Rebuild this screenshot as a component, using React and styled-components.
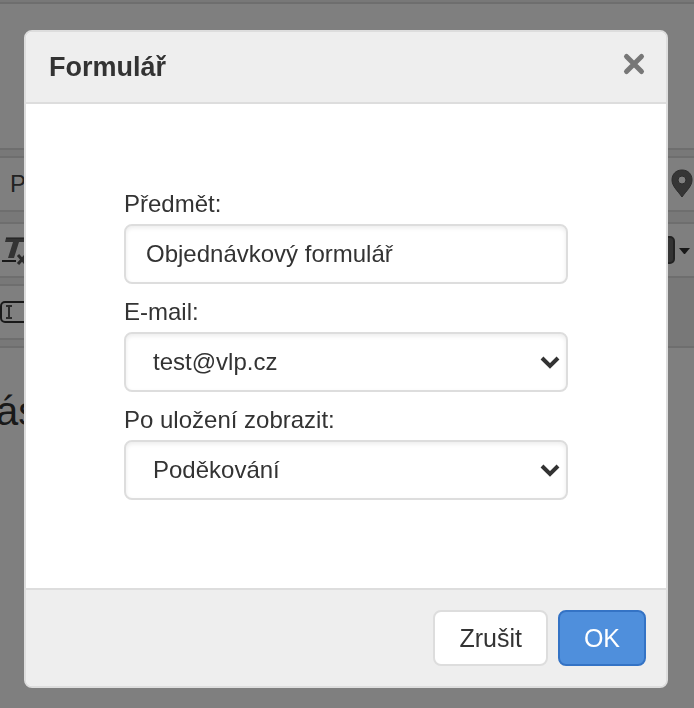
import { useState } from 'react';
import styled, { createGlobalStyle } from 'styled-components';

const GlobalStyle = createGlobalStyle`
  * {
    box-sizing: border-box;
  }
  body {
    margin: 0;
    background: #fff;
    color: #333;
    font-family: "Liberation Sans", Arial, sans-serif;
    font-size: 24px;
  }
`;

const Editor = styled.div`
  height: 100vh;
  overflow: hidden;
  display: flex;
  flex-direction: column;
  background: #fff;
`;

const TopBar = styled.div`
  height: 4px;
  flex-shrink: 0;
  background: #f0f0f0;
  border-bottom: 2px solid #ddd;
`;

const Heading = styled.div`
  height: 144px;
  flex-shrink: 0;
`;

const Toolbars = styled.div`
  display: flex;
  flex-direction: column;
  flex-shrink: 0;
  padding: 6px 0;
  background: #f0f0f0;
  border-top: 2px solid #ddd;
  border-bottom: 2px solid #ddd;
`;

const Toolbar = styled.div`
  display: flex;
  align-items: center;
  justify-content: space-between;
  width: ${props => props.$short ? '50%' : '100%'};
  height: 56px;
  margin-bottom: ${props => props.$gap || 0}px;
  padding-left: ${props => props.$inset || 0}px;
  background: #fff;
  border-top: 2px solid #ddd;
  border-bottom: 2px solid #ddd;
`;

const ToolButton = styled.button`
  display: flex;
  align-items: center;
  padding: 0;
  border: 0;
  background: none;
  color: #444;
  font: inherit;
`;

const Content = styled.div`
  padding: 40px 0;
  font-size: 40px;
  line-height: 46px;
  text-indent: -4px;
`;

const Backdrop = styled.div`
  position: fixed;
  inset: 0;
  overflow: auto;
  padding: 30px 26px 20px 24px;
  background: rgba(0, 0, 0, 0.5);
`;

const Dialog = styled.form`
  overflow: hidden;
  background: #fff;
  border: 2px solid #ddd;
  border-radius: 8px;
`;

const Header = styled.header`
  display: flex;
  align-items: center;
  justify-content: space-between;
  height: 72px;
  padding: 0 20px 0 23px;
  background: #eee;
  border-bottom: 2px solid #ddd;
`;

const Title = styled.h1`
  margin: 0;
  font-size: 27px;
  font-weight: bold;
  line-height: 32px;
`;

const CloseButton = styled.button`
  display: flex;
  margin-bottom: 6px;
  padding: 0;
  border: 0;
  background: none;
  color: #777;
`;

const Body = styled.div`
  display: flex;
  flex-direction: column;
  gap: 8px;
  padding: 80px 98px 88px;
`;

const Label = styled.label`
  display: block;
  line-height: 40px;
`;

const Input = styled.input`
  display: block;
  width: 100%;
  height: 60px;
  padding: 0 20px;
  border: 2px solid #ddd;
  border-radius: 8px;
  background: #fff;
  box-shadow: inset 0 2px 4px rgba(0, 0, 0, 0.08);
  color: #333;
  font: inherit;
  outline: none;
`;

const SelectBox = styled.div`
  display: grid;
  align-items: center;

  > * {
    grid-area: 1 / 1;
  }
  svg {
    justify-self: end;
    margin-right: 8px;
    pointer-events: none;
  }
`;

const Select = styled(Input).attrs({ as: 'select' })`
  appearance: none;
  padding: 0 40px 2px 27px;
`;

const Footer = styled.footer`
  display: flex;
  justify-content: flex-end;
  gap: 10px;
  padding: 20px;
  background: #eee;
  border-top: 2px solid #ddd;
`;

const Button = styled.button`
  height: 56px;
  padding: 0 24px;
  border: 2px solid ${props => props.$primary ? '#3473c5' : '#ddd'};
  border-radius: 8px;
  background: ${props => props.$primary ? '#4f8fdc' : '#fff'};
  color: ${props => props.$primary ? '#fff' : '#333'};
  font-family: inherit;
  font-size: 25px;
`;

function SelectField({ id, label, value, onChange, options }) {
  return (
    <div>
      <Label htmlFor={id}>{label}</Label>
      <SelectBox>
        <Select id={id} value={value} onChange={e => onChange(e.target.value)}>
          {options.map(option => <option key={option}>{option}</option>)}
        </Select>
        <svg width="20" height="14" viewBox="0 0 20 14" fill="none" stroke="#333" strokeWidth="4">
          <path d="M2 3l8 8 8-8" />
        </svg>
      </SelectBox>
    </div>
  );
}

export default function App() {
  const [subject, setSubject] = useState('Objednávkový formulář');
  const [email, setEmail] = useState('test@vlp.cz');
  const [afterSave, setAfterSave] = useState('Poděkování');

  return (
    <>
      <GlobalStyle />
      <Editor>
        <TopBar />
        <Heading />
        <Toolbars>
          <Toolbar $gap={10} $inset={10}>
            <ToolButton>P</ToolButton>
            <ToolButton aria-label="Mapa">
              <svg width="24" height="30" viewBox="0 0 24 30" fill="#6c6c6c" stroke="#585858">
                <path fillRule="evenodd" d="M12 1C6 1 2 5 2 11c0 6 5 10 10 17 5-7 10-11 10-17C22 5 18 1 12 1zm0 6a4 4 0 1 1 0 8 4 4 0 0 1 0-8z" />
              </svg>
            </ToolButton>
          </Toolbar>
          <Toolbar $gap={6}>
            <ToolButton aria-label="Odstranit formát">
              <svg width="32" height="32" viewBox="0 0 32 32">
                <path d="M6 4h20l-2 4h-5l-5 16H8l5-16H5z" fill="#666" />
                <path d="M6 4h20" stroke="#333" strokeWidth="1" />
                <path d="M2 27h14" stroke="#333" strokeWidth="2" />
                <path d="M18 21l8 9M26 21l-8 9" stroke="#555" strokeWidth="3" />
              </svg>
            </ToolButton>
            <ToolButton aria-label="Barva pozadí">
              <svg width="32" height="30" viewBox="0 0 32 30">
                <rect x="-18" y="2" width="30" height="26" rx="4" fill="#666" stroke="#444" strokeWidth="2" />
                <path d="M17 13h11l-5 6h-1z" fill="#333" />
              </svg>
            </ToolButton>
          </Toolbar>
          <Toolbar $short>
            <ToolButton aria-label="Textové pole">
              <svg width="44" height="24" viewBox="0 0 44 24" fill="none" stroke="#333" strokeWidth="2">
                <rect x="1" y="2" width="42" height="20" rx="4" />
                <path d="M6 6h6M9 6v12M6 18h6" stroke="#555" />
              </svg>
            </ToolButton>
          </Toolbar>
        </Toolbars>
        <Content>ás</Content>
      </Editor>
      <Backdrop>
        <Dialog role="dialog" aria-labelledby="dialog-title" onSubmit={e => e.preventDefault()}>
          <Header>
            <Title id="dialog-title">Formulář</Title>
            <CloseButton type="button" aria-label="Zavřít">
              <svg width="24" height="24" viewBox="0 0 24 24" fill="none" stroke="currentColor" strokeWidth="5" strokeLinecap="round">
                <path d="M4.500 4.500l15 15M19.500 4.500l-15 15" />
              </svg>
            </CloseButton>
          </Header>
          <Body>
            <div>
              <Label htmlFor="subject">Předmět:</Label>
              <Input id="subject" type="text" value={subject} onChange={e => setSubject(e.target.value)} />
            </div>
            <SelectField id="email" label="E-mail:" value={email} onChange={setEmail} options={['test@vlp.cz']} />
            <SelectField id="after-save" label="Po uložení zobrazit:" value={afterSave} onChange={setAfterSave} options={['Poděkování']} />
          </Body>
          <Footer>
            <Button type="button">Zrušit</Button>
            <Button type="submit" $primary>OK</Button>
          </Footer>
        </Dialog>
      </Backdrop>
    </>
  );
}
